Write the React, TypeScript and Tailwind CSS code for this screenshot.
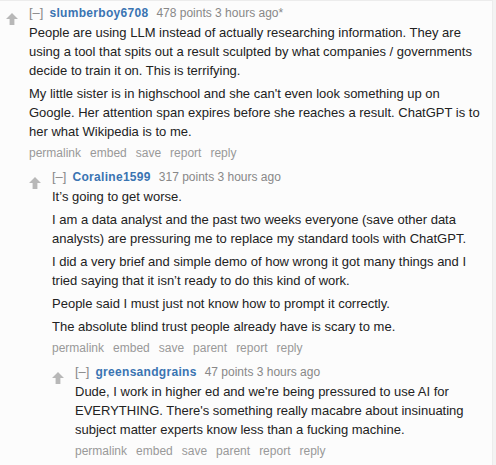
type CommentData = {
  author: string;
  meta: string;
  paragraphs: string[];
  actions: string[];
  children?: CommentData[];
};

const thread: CommentData = {
  author: 'slumberboy6708',
  meta: '478 points 3 hours ago*',
  paragraphs: [
    'People are using LLM instead of actually researching information. They are using a tool that spits out a result sculpted by what companies / governments decide to train it on. This is terrifying.',
    "My little sister is in highschool and she can't even look something up on Google. Her attention span expires before she reaches a result. ChatGPT is to her what Wikipedia is to me.",
  ],
  actions: ['permalink', 'embed', 'save', 'report', 'reply'],
  children: [
    {
      author: 'Coraline1599',
      meta: '317 points 3 hours ago',
      paragraphs: [
        'It’s going to get worse.',
        'I am a data analyst and the past two weeks everyone (save other data analysts) are pressuring me to replace my standard tools with ChatGPT.',
        'I did a very brief and simple demo of how wrong it got many things and I tried saying that it isn’t ready to do this kind of work.',
        'People said I must just not know how to prompt it correctly.',
        'The absolute blind trust people already have is scary to me.',
      ],
      actions: ['permalink', 'embed', 'save', 'parent', 'report', 'reply'],
      children: [
        {
          author: 'greensandgrains',
          meta: '47 points 3 hours ago',
          paragraphs: [
            "Dude, I work in higher ed and we're being pressured to use AI for EVERYTHING. There's something really macabre about insinuating subject matter experts know less than a fucking machine.",
          ],
          actions: ['permalink', 'embed', 'save', 'parent', 'report', 'reply'],
        },
      ],
    },
  ],
};

function UpArrow() {
  return (
    <svg width="12" height="12" viewBox="0 0 12 12" className="block">
      <path d="M6 0 L12 6 L8.4 6 L8.4 12 L3.6 12 L3.6 6 L0 6 Z" fill="#b8b8b8" />
    </svg>
  );
}

function Comment({ c }: { c: CommentData }) {
  return (
    <div className="flex">
      <div className="w-[23px] shrink-0 pt-[12px]">
        <UpArrow />
      </div>
      <div className="flex-1 min-w-0">
        <div className="flex items-center h-[16px] text-[12px] leading-[16px] mt-[4px]">
          <span className="text-[13px] text-[#888]">[–]</span>
          <span className="ml-[6px] font-bold text-[#3a74b2] tracking-[0.3px]">{c.author}</span>
          <span className="ml-[8px] text-[#888]">{c.meta}</span>
        </div>
        <div className="mt-[2px] text-[13px] leading-[19px] text-[#222] pr-[6px] space-y-[4px]">
          {c.paragraphs.map((p, i) => (
            <p key={i}>{p}</p>
          ))}
        </div>
        <ul className="flex gap-[9px] mt-[4px] text-[12px] leading-[16px] text-[#999]">
          {c.actions.map((a) => (
            <li key={a}>{a}</li>
          ))}
        </ul>
        {c.children?.map((child) => (
          <div key={child.author} className="mt-[4px]">
            <Comment c={child} />
          </div>
        ))}
      </div>
    </div>
  );
}

export default function App() {
  return (
    <div className="min-h-screen bg-[#f3f3f3] font-['Liberation_Sans',Arial,sans-serif]">
      <div className="w-[493px] h-[465px] overflow-hidden bg-[#fcfcfc] border-r border-t border-[#ececec] pl-[6px]">
        <Comment c={thread} />
      </div>
    </div>
  );
}
